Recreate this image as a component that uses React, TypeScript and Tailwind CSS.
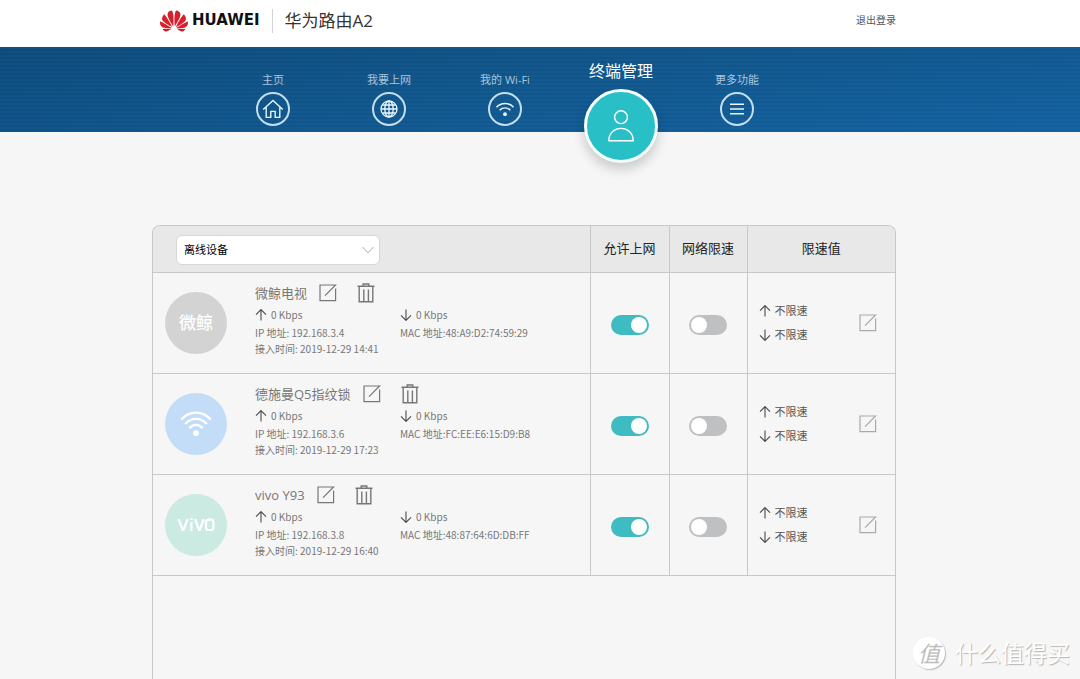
import type { ReactNode } from "react";
import { SiHuawei } from "react-icons/si";

type Device = {
  name: string;
  ip: string;
  mac: string;
  joined: string;
  avatar: ReactNode;
  avatarClass: string;
};

const WifiAvatar = () => (
  <svg viewBox="0 0 32 26" className="h-[26px] w-8" fill="none" stroke="currentColor" strokeWidth="2.3" aria-hidden="true">
    <path d="M1.2 8.6C9.5-.6 22.5-.6 30.8 8.6" />
    <path d="M5.2 13c5.8-6.9 15.8-6.9 21.6 0" />
    <path d="M9.4 17.2c3.6-4.4 9.6-4.4 13.2 0" />
    <circle cx="16" cy="22.2" r="2.9" fill="currentColor" stroke="none" />
  </svg>
);

const devices: Device[] = [
  {
    name: "微鲸电视",
    ip: "192.168.3.4",
    mac: "48:A9:D2:74:59:29",
    joined: "2019-12-29 14:41",
    avatar: <span className="text-[17px] font-medium">微鲸</span>,
    avatarClass: "bg-[#d3d3d3]",
  },
  {
    name: "德施曼Q5指纹锁",
    ip: "192.168.3.6",
    mac: "FC:EE:E6:15:D9:B8",
    joined: "2019-12-29 17:23",
    avatar: <WifiAvatar />,
    avatarClass: "bg-[#c3ddf8]",
  },
  {
    name: "vivo Y93",
    ip: "192.168.3.8",
    mac: "48:87:64:6D:DB:FF",
    joined: "2019-12-29 16:40",
    avatar: (
      <svg viewBox="0 0 38 16" className="w-[38px]" fill="none" stroke="currentColor" strokeWidth="2.2" aria-label="vivo">
        <path d="M1.5 2l4.2 11h.8l4.2-11M14.4 5v9M18 2l4 11h.8l4-11" />
        <path d="M14.4 1v2" />
        <rect x="29" y="2.6" width="7.4" height="10.4" rx="2.4" />
      </svg>
    ),
    avatarClass: "bg-[#cbeae2]",
  },
];

const EditIcon = () => (
  <svg viewBox="0 0 18 18" className="size-[18px]" fill="none" stroke="currentColor" strokeWidth="1.2" aria-hidden="true">
    <path d="M16.6 4.5v12.2H1V1h15.6L6 11.6" />
  </svg>
);

const TrashIcon = () => (
  <svg viewBox="0 0 18 20" className="h-5 w-[18px]" fill="none" stroke="currentColor" strokeWidth="1.4" aria-hidden="true">
    <path d="M.5 3.2h17M6.2 3V1h5.6v2M2.2 3.4v15.4h13.6V3.4M6.8 6.4v12M11.4 6.4v12" />
  </svg>
);

const Arrow = ({ down = false }: { down?: boolean }) => (
  <svg viewBox="0 0 12 12" className="size-3 shrink-0 text-[#4a4a4a]" fill="none" stroke="currentColor" strokeWidth="1.1" aria-hidden="true">
    <path d={down ? "M6 .5v11M1 6.4l5 5 5-5" : "M6 11.5V.5M1 5.6l5-5 5 5"} />
  </svg>
);

const HomeIcon = () => (
  <svg viewBox="0 0 22 22" className="size-[22px]" fill="none" stroke="currentColor" strokeWidth="1.4" aria-hidden="true">
    <path d="M1.2 11.4L11 2.4l9.8 9M4.2 9.4v10h4.6v-6h4.4v6h4.6v-10" />
  </svg>
);

const GlobeIcon = () => (
  <svg viewBox="0 0 20 20" className="size-5" fill="none" stroke="currentColor" strokeWidth="1.3" aria-hidden="true">
    <circle cx="10" cy="10" r="8" />
    <ellipse cx="10" cy="10" rx="4.2" ry="8" />
    <path d="M10 2v16M2 10h16M3.4 6h13.2M3.4 14h13.2" />
  </svg>
);

const WifiIcon = () => (
  <svg viewBox="0 0 20 20" className="size-5" fill="none" stroke="currentColor" strokeWidth="1.5" aria-hidden="true">
    <path d="M1.4 8.2c4.8-5 12.4-5 17.2 0M4.6 11.2c3.2-3 7.6-3 10.8 0" />
    <circle cx="10" cy="15.2" r="1.9" fill="currentColor" stroke="none" />
  </svg>
);

const UserIcon = () => (
  <svg viewBox="0 0 28 32" className="h-8 w-7" fill="none" stroke="currentColor" strokeWidth="1.4" aria-hidden="true">
    <circle cx="14" cy="7.2" r="6.4" />
    <path d="M1.8 30.8c0-16.6 24.4-16.6 24.4 0z" />
  </svg>
);

const MenuIcon = () => (
  <svg viewBox="0 0 20 20" className="size-5" fill="none" stroke="currentColor" strokeWidth="1.5" aria-hidden="true">
    <path d="M3 5.2h14M3 10h14M3 14.8h14" />
  </svg>
);

const navItems = [
  { label: "主页", icon: <HomeIcon /> },
  { label: "我要上网", icon: <GlobeIcon /> },
  { label: "我的 Wi-Fi", icon: <WifiIcon /> },
  { label: "终端管理", icon: <UserIcon />, active: true },
  { label: "更多功能", icon: <MenuIcon /> },
];

const Toggle = ({ label, on = false }: { label: string; on?: boolean }) => (
  <input
    type="checkbox"
    role="switch"
    aria-label={label}
    defaultChecked={on}
    className="mx-auto mt-1 block h-5 w-[38px] cursor-pointer appearance-none rounded-full bg-[#bfc0c1] p-0.5 before:block before:size-4 before:rounded-full before:bg-white checked:bg-[#3fbbc2] checked:before:ml-[18px]"
  />
);

const DeviceRow = ({ device }: { device: Device }) => (
  <tr className="h-[101px] border-b border-[#c8c8c8]">
    <td className="p-0">
      <div className="flex items-center pl-3">
        <div className={`flex size-[62px] shrink-0 items-center justify-center rounded-full text-white ${device.avatarClass}`}>
          {device.avatar}
        </div>
        <div className="ml-7 flex-1 pb-2 text-[10px] leading-4 text-[#777]">
          <div className="flex h-6 items-center">
            <span className="text-[13px]">{device.name}</span>
            <button type="button" aria-label={`编辑 ${device.name}`} className="ml-3 cursor-pointer">
              <EditIcon />
            </button>
            <button type="button" aria-label={`删除 ${device.name}`} className="ml-5 cursor-pointer">
              <TrashIcon />
            </button>
          </div>
          <div className="grid grid-cols-[145px_1fr] font-['Noto_Sans_CJK_SC',sans-serif]">
            <span className="flex h-5 items-center gap-1">
              <Arrow />0 Kbps
            </span>
            <span className="flex h-5 items-center gap-1">
              <Arrow down />0 Kbps
            </span>
            <span>IP 地址: {device.ip}</span>
            <span>MAC 地址:{device.mac}</span>
            <span>接入时间: {device.joined}</span>
          </div>
        </div>
      </div>
    </td>
    <td className="border-l border-[#c8c8c8] p-0">
      <Toggle label={`${device.name} 允许上网`} on />
    </td>
    <td className="border-l border-[#c8c8c8] p-0">
      <Toggle label={`${device.name} 网络限速`} />
    </td>
    <td className="border-l border-[#c8c8c8] p-0">
      <div className="flex items-center justify-between pr-[18px] pl-[11px] text-[11px] leading-6 text-[#555]">
        <div>
          <div className="flex items-center gap-1">
            <Arrow />不限速
          </div>
          <div className="flex items-center gap-1">
            <Arrow down />不限速
          </div>
        </div>
        <button type="button" aria-label={`编辑限速 ${device.name}`} className="cursor-pointer text-[#aaa]">
          <EditIcon />
        </button>
      </div>
    </td>
  </tr>
);

export default function App() {
  return (
    <div className="relative flex min-h-screen flex-col bg-[#f6f6f6] font-['Open_Sans','Noto_Sans_CJK_SC',sans-serif]">
      <header className="bg-white pr-8">
        <div className="mx-auto flex h-[47px] max-w-[744px] items-center pb-1.5 pl-2">
          <SiHuawei className="size-7 text-[#d7202e]" aria-hidden="true" />
          <span className="ml-1 font-['DejaVu_Sans',sans-serif] text-[15px] font-bold text-[#111]">HUAWEI</span>
          <h1 className="ml-3 border-l border-[#d4d4d4] pl-3 text-[17px] leading-6 text-[#333]">华为路由A2</h1>
          <a href="#logout" className="ml-auto text-[10px] text-[#555]">
            退出登录
          </a>
        </div>
      </header>

      <nav className="h-[85px] bg-[repeating-linear-gradient(to_bottom,#ffffff06_0_2px,transparent_2px_4px),linear-gradient(to_bottom,#00000018,transparent),linear-gradient(to_right,#0d5187,#105a93_50%,#1160a0)] pr-8">
        <ul className="mx-auto flex max-w-[744px] pl-[63px]">
          {navItems.map((item) => (
            <li key={item.label} className="w-[116px]">
              {item.active ? (
                <a href="#devices" aria-current="page" className="flex flex-col items-center gap-1.5 pt-3 text-white">
                  <span className="text-base leading-6">{item.label}</span>
                  <span className="flex size-[74px] items-center justify-center rounded-full border-[3px] border-[#f4feff] bg-[#29bfc6] shadow-[0_6px_12px_#00000030]">
                    {item.icon}
                  </span>
                </a>
              ) : (
                <a href={`#${item.label}`} className="flex flex-col items-center gap-1 pt-[25px] text-[#a9c6dd]">
                  <span className="text-[11px] leading-4">{item.label}</span>
                  <span className="flex size-[34px] items-center justify-center rounded-full border-2 border-[#c4deec] text-[#e8f6fc]">
                    {item.icon}
                  </span>
                </a>
              )}
            </li>
          ))}
        </ul>
      </nav>

      <main className="flex flex-1 flex-col pt-[93px] pr-8">
        <section className="mx-auto w-full max-w-[744px] flex-1 overflow-hidden rounded-t-lg border-x border-t border-[#c8c8c8]">
          <table className="w-full table-fixed border-collapse">
            <thead>
              <tr className="h-[46px] border-b border-[#c8c8c8] bg-[#e8e8e8] text-[13px] text-[#222]">
                <th scope="col" className="p-0 text-left font-normal">
                  <div className="relative mt-0.5 ml-[23px] w-[204px]">
                    <select
                      aria-label="设备类型"
                      className="block h-[30px] w-full cursor-pointer appearance-none rounded-md border border-[#d6d6d6] bg-white px-[7px] text-[11px] text-black"
                    >
                      <option>离线设备</option>
                    </select>
                    <svg viewBox="0 0 12 8" className="pointer-events-none absolute top-[11px] right-1.5 w-3" fill="none" stroke="#aaa" aria-hidden="true">
                      <path d="M.5 1L6 6.8 11.5 1" />
                    </svg>
                  </div>
                </th>
                <th scope="col" className="w-[79px] border-l border-[#c8c8c8] p-0 font-normal">允许上网</th>
                <th scope="col" className="w-[78px] border-l border-[#c8c8c8] p-0 font-normal">网络限速</th>
                <th scope="col" className="w-[148px] border-l border-[#c8c8c8] p-0 font-normal">限速值</th>
              </tr>
            </thead>
            <tbody>
              {devices.map((device) => (
                <DeviceRow key={device.mac} device={device} />
              ))}
            </tbody>
          </table>
        </section>
      </main>

      <div className="pointer-events-none absolute right-2.5 bottom-2.5 flex items-center gap-2.5">
        <span className="flex size-8 items-center justify-center rounded-full bg-white text-[22px] text-[#bdbdbd] italic shadow-[1px_1px_1px_#bbb]">值</span>
        <span className="text-[23px] leading-8 text-white [text-shadow:1px_1px_1px_#b4b4b4]">什么值得买</span>
      </div>
    </div>
  );
}
